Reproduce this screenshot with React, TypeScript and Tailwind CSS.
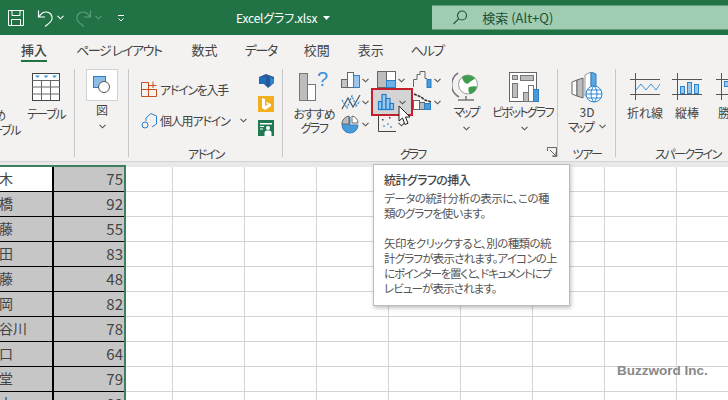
const FONT = "font-['Noto_Sans_CJK_JP','Liberation_Sans',sans-serif] [font-feature-settings:'palt']";

const TABS = [
  { label: 'ページ レイアウト', cls: 'ml-[29px] tracking-[-1.4px]' },
  { label: '数式', cls: 'ml-[30px]' },
  { label: 'データ', cls: 'ml-[27px] tracking-[-1.4px]' },
  { label: '校閲', cls: 'ml-[27px]' },
  { label: '表示', cls: 'ml-[28px]' },
  { label: 'ヘルプ', cls: 'ml-[27px] tracking-[-1.4px]' }
];

const ROWS = [
  { name: '鈴木', score: 75 },
  { name: '高橋', score: 92 },
  { name: '佐藤', score: 55 },
  { name: '山田', score: 83 },
  { name: '加藤', score: 48 },
  { name: '片岡', score: 82 },
  { name: '長谷川', score: 78 },
  { name: '山口', score: 64 },
  { name: '藤堂', score: 79 },
  { name: '山本', score: 89 }
];

const TIP_LINES = [
  { text: 'データの統計分析の表示に、この種', cls: 'tracking-[-0.45px]' },
  { text: '類のグラフを使います。', cls: 'tracking-[-0.9px]' },
  { text: '', cls: '' },
  { text: '矢印をクリックすると、別の種類の統', cls: 'tracking-[-0.6px]' },
  { text: '計グラフが表示されます。アイコンの上', cls: 'tracking-[-0.8px]' },
  { text: 'にポインターを置くと、ドキュメントにプ', cls: 'tracking-[-1.2px]' },
  { text: 'レビューが表示されます。', cls: 'tracking-[-0.9px]' }
];

function Chevron({ className = 'text-[#555]' }: { className?: string }) {
  return (
    <svg width="7" height="5" viewBox="0 0 7 5" className={className}>
      <path d="M0.5 0.8 3.5 3.8 6.5 0.8" fill="none" stroke="currentColor" strokeWidth="1.1" />
    </svg>
  );
}

function SmallChart({ kind }: { kind: string }) {
  return (
    <svg width="20" height="20" viewBox="0 0 20 20">
      {kind === 'column' && (
        <g stroke="#666" strokeWidth="1">
          <rect x="0.5" y="9.5" width="6" height="8" fill="#c4c4c4" />
          <rect x="6.5" y="2.5" width="6" height="15" fill="#fff" />
          <rect x="12.5" y="5.5" width="6" height="12" fill="#9cc6ea" stroke="#2a86d5" />
        </g>
      )}
      {kind === 'line' && (
        <g fill="none">
          <path d="M1 17 7 6 12 15 19 3" stroke="#555" strokeWidth="1.2" />
          <path d="M1 8 6 16 11 4 15 14 19 9" stroke="#2a86d5" strokeWidth="1.2" strokeDasharray="2 1" />
        </g>
      )}
      {kind === 'pie' && (
        <g>
          <path d="M9 3a8 8 0 1 0 8 8H9z" fill="#4a9ad8" stroke="#2a7fc8" />
          <path d="M8 2a8 8 0 0 0-7 8h7z" fill="#bdbdbd" stroke="#666" />
          <path d="M11 2a7 7 0 0 1 6 7h-6z" fill="#fff" stroke="#666" />
        </g>
      )}
      {kind === 'tree' && (
        <g stroke="#666" strokeWidth="1">
          <rect x="0.5" y="1.5" width="18" height="16" fill="#fff" />
          <rect x="0.5" y="1.5" width="9" height="16" fill="#bdbdbd" />
          <rect x="9.5" y="10.5" width="9" height="7" fill="#6cb0e6" stroke="#2a7fc8" />
        </g>
      )}
      {kind === 'hist' && (
        <g fill="#9cc6ea" stroke="#1e7fd0" strokeWidth="1.2">
          <rect x="1.5" y="9.5" width="3.5" height="8" />
          <rect x="5" y="2.5" width="4" height="15" />
          <rect x="9" y="6.5" width="4" height="11" />
          <rect x="13" y="11.5" width="3.5" height="6" />
        </g>
      )}
      {kind === 'scatter' && (
        <g>
          <path d="M1.5 2v15.5H19" fill="none" stroke="#444" />
          <g fill="#8ab8dd">
            <rect x="6" y="11" width="2" height="2" />
            <rect x="10" y="9" width="2" height="2" />
            <rect x="13" y="12" width="2" height="2" />
          </g>
          <g fill="#444">
            <rect x="5" y="5" width="1.5" height="1.5" />
            <rect x="12" y="3" width="1.5" height="1.5" />
          </g>
        </g>
      )}
      {kind === 'water' && (
        <g fill="none" stroke="#666">
          <path d="M0.5 17V9.5H4V4.5H7V1.5H12V8.5H14" />
          <rect x="14" y="9.5" width="4" height="8" fill="#4a9ad8" stroke="#2a7fc8" />
        </g>
      )}
      {kind === 'combo' && (
        <g stroke="#666">
          <rect x="0.5" y="8.5" width="6" height="9" fill="#fff" />
          <rect x="6.5" y="10.5" width="5" height="7" fill="#bdbdbd" />
          <rect x="11.5" y="11.5" width="6" height="6" fill="#4a9ad8" stroke="#2a7fc8" />
          <path d="M1 2 8 5 12 8 18 10" fill="none" stroke="#333" strokeWidth="1.6" strokeDasharray="3 1" />
        </g>
      )}
    </svg>
  );
}

function ChartCell({ kind, active = false }: { kind: string; active?: boolean }) {
  return (
    <div className="relative flex h-[22px] w-[36px] items-center">
      {active && <div className="absolute -top-[3px] -bottom-[3px] -left-[6px] right-0 border-2 border-[#c4202b] bg-[#d4d4d4]" />}
      <div className="relative flex w-full items-center gap-[1px]">
        <SmallChart kind={kind} />
        <Chevron className={active ? 'ml-[1px] text-[#555]' : 'text-[#555]'} />
      </div>
    </div>
  );
}

function Group({ width, label, children, labelCls = '' }: { width: string; label: string; children: React.ReactNode; labelCls?: string }) {
  return (
    <div className={`relative flex shrink-0 flex-col ${width}`}>
      <div className="flex h-[85px] pt-[7px]">{children}</div>
      <p className={`h-[14px] text-center text-[12px] leading-[14px] text-[#444] ${labelCls}`}>{label}</p>
      <div className="absolute right-0 top-[7px] h-[88px] w-px bg-[#c8c8c8]" />
    </div>
  );
}

function SparkIcon({ children }: { children: React.ReactNode }) {
  return (
    <svg width="30" height="28" viewBox="0 0 30 28" fill="none">
      <path d="M0 7.5H30M0 22.5H30M5.5 1V28" stroke="#555" />
      {children}
    </svg>
  );
}

export default function App() {
  return (
    <div className={`relative h-[400px] w-[728px] overflow-hidden bg-white ${FONT}`}>
      {/* title bar */}
      <div className="flex h-[35px] items-center bg-[#217346] text-white">
        <svg width="18" height="18" viewBox="0 0 18 18" fill="none" stroke="#fff" className="ml-[7px]">
          <path d="M1.5 1.5H16.5V16.5H1.5ZM5 1.5V6.5H13V1.5M4.5 16.5V10.5H13.5V16.5" />
        </svg>
        <svg width="18" height="18" viewBox="0 0 18 18" fill="none" stroke="#fff" strokeWidth="1.2" className="ml-[12px]">
          <path d="M1.5 1.5V8H8M2 8C4 4 7 3 9 3 13 3 15.5 6 15 10 14.5 13 11 15 8 17.5" />
        </svg>
        <Chevron className="ml-[2px] text-white" />
        <svg width="18" height="18" viewBox="0 0 18 18" fill="none" stroke="#5f9d7e" strokeWidth="1.2" className="ml-[10px]">
          <path d="M16.5 1.5V8H10M16 8C14 4 11 3 9 3 5 3 2.5 6 3 10 3.5 13 7 15 10 17.5" />
        </svg>
        <Chevron className="ml-[3px] text-[#5f9d7e]" />
        <svg width="8" height="8" viewBox="0 0 8 8" fill="none" stroke="#fff" className="ml-[15px]">
          <path d="M1 1.5H7M1.5 4.5 4 7 6.5 4.5" />
        </svg>
        <span className="ml-[111px] whitespace-nowrap text-[12px] leading-none tracking-[-0.2px]">Excelグラフ.xlsx</span>
        <svg width="7" height="4" viewBox="0 0 7 4" className="ml-[6px]"><path d="M0 0H7L3.5 4Z" fill="#fff" /></svg>
        <div className="ml-[102px] flex h-[24px] flex-1 -translate-y-[0.5px] items-center bg-[#a0cdb1] text-[#1f4f38]">
          <svg width="16" height="16" viewBox="0 0 16 16" fill="none" stroke="#24523b" strokeWidth="1.2" className="ml-[20px]">
            <circle cx="10" cy="6" r="4.5" />
            <path d="M6.8 9.2 1.5 14.5" />
          </svg>
          <span className="ml-[14px] whitespace-nowrap text-[13px]">検索 (Alt+Q)</span>
        </div>
      </div>

      {/* tabs */}
      <div className="flex h-[27px] items-center bg-[#f3f2f1] pt-[2px] text-[13px] text-[#444]">
        <div className="relative ml-[21px] flex h-full items-center font-medium">
          <span>挿入</span>
          <div className="absolute bottom-0 left-0 h-[2px] w-full bg-[#217346]" />
        </div>
        {TABS.map((tab) => (
          <span key={tab.label} className={`whitespace-nowrap ${tab.cls}`}>{tab.label}</span>
        ))}
      </div>

      {/* ribbon */}
      <div className="flex h-[100px] overflow-hidden border-b border-[#d2d2d2] bg-[#f3f2f1] text-[12px] leading-[15px] text-[#444]">
        <Group width="w-[75px]" label="">
          <div className="flex w-[25px] shrink-0 flex-col items-end overflow-hidden pt-[38px]">
            <span className="mr-[20px] whitespace-nowrap tracking-[-1px]">おすすめ</span>
            <span className="mr-[5px] whitespace-nowrap tracking-[-1.4px]">テーブル</span>
          </div>
          <div className="flex w-[42px] flex-col items-center">
            <svg width="28" height="28" viewBox="0 0 28 28" className="mt-[4px]">
              <rect x="0.5" y="0.5" width="27" height="27" fill="#fff" stroke="#444" />
              <rect x="1" y="1" width="26" height="5.5" fill="#fff" />
              <path d="M3 2.5H8L5.5 5ZM11.5 2.5H16.5L14 5ZM20 2.5H25L22.5 5Z" fill="#3d9ad6" />
              <path d="M0 7.5H28M0 14H28M0 21H28M9.5 7.5V28M18.5 7.5V28" stroke="#666" />
            </svg>
            <span className="mt-[5px] whitespace-nowrap tracking-[-1.4px]">テーブル</span>
          </div>
        </Group>

        <Group width="w-[54px]" label="">
          <div className="flex w-full flex-col items-center">
            <div className="flex h-[32px] w-[32px] items-center justify-center border border-[#d2d2d2] bg-white">
              <svg width="18" height="18" viewBox="0 0 18 18">
                <rect x="0.5" y="0.5" width="12" height="11" fill="#8cbde6" stroke="#2a7fc8" />
                <circle cx="11" cy="11" r="5.5" fill="#fff" stroke="#555" />
              </svg>
            </div>
            <span className="mt-[1px]">図</span>
            <Chevron className="mt-[7px] text-[#555]" />
          </div>
        </Group>

        <Group width="w-[154px]" label="アドイン" labelCls="tracking-[-1.5px]">
          <div className="flex w-full pl-[12px]">
            <div className="flex w-[117px] flex-col">
              <div className="mt-[12px] flex h-[16px] items-center">
                <svg width="16" height="16" viewBox="0 0 16 16" fill="none" stroke="#c8501f">
                  <path d="M0.5 1.5H7.5V15.5H0.5ZM0.5 8.5H15.5V15.5H7.5M8 4.5H15.5M12 0.5V7" />
                </svg>
                <span className="ml-[3px] whitespace-nowrap tracking-[-1.3px]">アドインを入手</span>
              </div>
              <div className="mt-[15px] flex h-[17px] items-center">
                <svg width="17" height="17" viewBox="0 0 17 17" fill="none" stroke="#2a7fc8">
                  <path d="M5 6 10 1.5 15.5 4V12L11 15" />
                  <path d="M5 6V9" />
                  <circle cx="4" cy="13" r="3" />
                </svg>
                <span className="ml-[2px] whitespace-nowrap tracking-[-1.2px]">個人用アドイン</span>
                <Chevron className="ml-[10px] text-[#555]" />
              </div>
            </div>
            <div className="flex flex-col items-center gap-[8px]">
              <svg width="15" height="14" viewBox="0 0 15 14" className="mt-[5px]">
                <path d="M0 3 7 0 15 3V9L9 14 5 10H0Z" fill="#2b5797" />
                <path d="M11 3 15 5V9L11 11Z" fill="#2a86d5" />
                <rect x="0" y="3" width="7" height="7" fill="#1d6ec0" />
              </svg>
              <svg width="16" height="16" viewBox="0 0 16 16">
                <rect width="16" height="16" fill="#f2b01e" />
                <path d="M4 2 7 3V10L10 8.5 8.5 7.5 8 6 13 8V10L7 14 4 12Z" fill="#fff" />
              </svg>
              <svg width="16" height="16" viewBox="0 0 16 16">
                <rect width="16" height="16" fill="#1f7a52" />
                <path d="M2 3H14V4.5H2ZM2 6H6V7H2ZM2 8.5H5V9.5H2Z" fill="#fff" />
                <circle cx="10" cy="8" r="2" fill="#fff" />
                <path d="M6.5 16V13C6.5 11 8 10.5 10 10.5S13.5 11 13.5 13V16Z" fill="#fff" />
              </svg>
            </div>
          </div>
        </Group>

        <Group width="w-[275px]" label="グラフ" labelCls="pr-[16px] tracking-[-2px]">
          <div className="flex w-full">
            <div className="ml-[6px] flex w-[50px] flex-col items-center">
              <svg width="30" height="30" viewBox="0 0 30 30" className="mt-[3px]">
                <rect x="0.5" y="1.5" width="8" height="27" fill="#bdbdbd" stroke="#777" />
                <rect x="8.5" y="12.5" width="8" height="16" fill="#fff" stroke="#777" />
                <text x="18" y="14" fontSize="20" fill="#3a8fd6" fontFamily="Liberation Sans">?</text>
              </svg>
              <span className="mt-[4px] whitespace-nowrap tracking-[-1px]">おすすめ</span>
              <span className="-mt-[1px] whitespace-nowrap tracking-[-1.5px]">グラフ</span>
            </div>
            <div className="ml-[2px] grid h-[66px] w-[108px] shrink-0 grid-cols-[36px_36px_36px]">
              <ChartCell kind="column" />
              <ChartCell kind="tree" />
              <ChartCell kind="water" />
              <ChartCell kind="line" />
              <ChartCell kind="hist" active />
              <ChartCell kind="combo" />
              <ChartCell kind="pie" />
              <ChartCell kind="scatter" />
            </div>
            <div className="-ml-[6px] flex w-[46px] flex-col items-center">
              <svg width="28" height="31" viewBox="0 0 28 31" className="mt-[3px]">
                <path d="M6 1A14 14 0 0 0 7 25" fill="none" stroke="#777" strokeWidth="1.5" />
                <circle cx="16" cy="12.5" r="9.5" fill="#fff" stroke="#999" />
                <path d="M10 5C14 2 20 3 23 6 21 9 19 8 17 11 14 13 11 10 10 5ZM17 15C20 14 24 14 25 15 23 20 20 22 18 22 16 20 16 17 17 15Z" fill="#3f9e4d" />
                <path d="M6 28H22M14 24V28" stroke="#777" strokeWidth="1.5" />
              </svg>
              <span className="mt-[1px] whitespace-nowrap tracking-[-2px]">マップ</span>
              <Chevron className="mt-[7px] text-[#555]" />
            </div>
            <div className="ml-[4px] flex w-[62px] flex-col items-center">
              <svg width="31" height="31" viewBox="0 0 31 31" className="mt-[3px]">
                <rect x="0.5" y="0.5" width="27" height="29" fill="#fff" stroke="#666" />
                <rect x="3.5" y="3.5" width="5" height="4" fill="#bdbdbd" stroke="#777" />
                <rect x="11.5" y="3.5" width="13" height="5" fill="#bdbdbd" stroke="#777" />
                <rect x="3.5" y="11.5" width="5" height="14" fill="#bdbdbd" stroke="#777" />
                <rect x="14.5" y="20.5" width="5" height="9" fill="#bdbdbd" stroke="#777" />
                <rect x="19.5" y="13.5" width="5" height="16" fill="#fff" stroke="#777" />
                <rect x="24.5" y="17.5" width="5" height="12" fill="#4a9ad8" stroke="#2a7fc8" />
              </svg>
              <span className="mr-[3px] mt-[1px] whitespace-nowrap tracking-[-1.7px]">ピボットグラフ</span>
              <Chevron className="mt-[7px] text-[#555]" />
            </div>
          </div>
          <svg width="10" height="10" viewBox="0 0 10 10" fill="none" stroke="#666" className="absolute bottom-[4px] right-[1px]">
            <path d="M0.5 4V0.5H9.5V9.5H6M3 3 9 9M5 9H9V5" />
          </svg>
        </Group>

        <Group width="w-[58px]" label="ツアー" labelCls="tracking-[-1.5px]">
          <div className="flex w-full flex-col items-center">
            <svg width="32" height="31" viewBox="0 0 32 31" className="mt-[3px]">
              <path d="M1 10 6 8V24L1 22Z" fill="#fff" stroke="#666" />
              <path d="M6 8 12 6V26L6 24Z" fill="#bdbdbd" stroke="#666" />
              <path d="M14 3 20 0V24H14Z" fill="#fff" stroke="#999" />
              <path d="M20 0 25 2V16H20Z" fill="#5aa7e3" stroke="#2a7fc8" />
              <circle cx="23" cy="22" r="8" fill="#fff" stroke="#2a86d5" />
              <path d="M15 22H31M23 14C19 18 19 26 23 30 27 26 27 18 23 14ZM16 18H30M16 26H30" fill="none" stroke="#2a86d5" />
            </svg>
            <span className="mt-[1px]">3D</span>
            <span className="flex items-center whitespace-nowrap tracking-[-2px]">マップ<Chevron className="ml-[6px] text-[#555]" /></span>
          </div>
        </Group>

        <div className="flex shrink-0 flex-col">
          <div className="flex h-[85px] pt-[10px]">
            <div className="ml-[8px] flex w-[42px] flex-col items-center">
              <SparkIcon>
                <path d="M6 18 11 12 16 18 21 12 26 18 30 12" stroke="#3f94d8" />
              </SparkIcon>
              <span className="mt-[5px] whitespace-nowrap">折れ線</span>
            </div>
            <div className="flex w-[42px] flex-col items-center">
              <SparkIcon>
                <g fill="#9cc6ea" stroke="#2a86d5">
                  <rect x="8.5" y="14.5" width="4" height="7" />
                  <rect x="15.5" y="10.5" width="4" height="11" />
                  <rect x="22.5" y="12.5" width="4" height="9" />
                </g>
              </SparkIcon>
              <span className="mt-[5px] whitespace-nowrap">縦棒</span>
            </div>
            <div className="flex w-[42px] flex-col items-start pl-[8px]">
              <SparkIcon>
                <g fill="#9cc6ea" stroke="#2a86d5">
                  <rect x="8.5" y="9.5" width="4" height="5" />
                  <rect x="15.5" y="9.5" width="4" height="5" />
                </g>
              </SparkIcon>
              <span className="mt-[5px] whitespace-nowrap pl-[2px]">勝敗</span>
            </div>
          </div>
          <p className="ml-[39px] h-[14px] whitespace-nowrap text-[12px] leading-[14px] tracking-[-1.5px]">スパークライン</p>
        </div>
      </div>

      {/* sheet */}
      <div className="h-[3px] bg-[#e8e8e8]" />
      <div className="flex">
        <div className="h-[240px] w-[126px] shrink-0 overflow-hidden border-r-2 border-t-2 border-[#3f7f60]">
          {ROWS.map((row, i) => (
            <div key={row.name} className="flex h-[25px] border-b border-black">
              <div className={`w-[54px] overflow-hidden border-r-2 border-black text-[14px] leading-[23px] text-[#444] ${i === 0 ? 'bg-white' : 'bg-[#c6c6c6]'}`}>
                <span className="-ml-[15px] block whitespace-nowrap [font-feature-settings:normal]">{row.name}</span>
              </div>
              <div className="flex-1 bg-[#c6c6c6] pr-[1px] text-right text-[15px] leading-[23px] text-[#444]">{row.score}</div>
            </div>
          ))}
        </div>
        <div className="grid flex-1 grid-cols-[47px_repeat(8,72px)] overflow-hidden border-t-2 border-[#e8e8e8]">
          {Array.from({ length: 90 }, (_, i) => (
            <div key={i} className="h-[25px] border-b border-r border-[#d4d4d4]" />
          ))}
        </div>
      </div>

      {/* tooltip */}
      <div className="absolute left-[373px] top-[164px] h-[142px] w-[197px] border border-[#bcbcbc] bg-white px-[10px] pt-[6px] shadow-[1px_2px_4px_rgba(0,0,0,0.25)]">
        <p className="whitespace-nowrap text-[12px] font-medium leading-[18px] tracking-[-0.6px] text-[#444]">統計グラフの挿入</p>
        <div className="mt-[2px] text-[11.5px] leading-[15px] text-[#555]">
          {TIP_LINES.map((line, i) => (
            <p key={i} className={`h-[15px] whitespace-nowrap ${line.cls}`}>{line.text}</p>
          ))}
        </div>
      </div>

      {/* cursor */}
      <svg width="15" height="21" viewBox="0 0 15 21" className="absolute left-[398px] top-[105px]">
        <path d="M1 1V16L4.5 13 7 19.5 10 18.3 7.5 12H12Z" fill="#fff" stroke="#222" />
      </svg>

      <span className="absolute left-[617px] top-[362px] font-['Liberation_Sans',sans-serif] text-[13.5px] font-bold leading-[18px] text-[#888]">Buzzword Inc.</span>
    </div>
  );
}
